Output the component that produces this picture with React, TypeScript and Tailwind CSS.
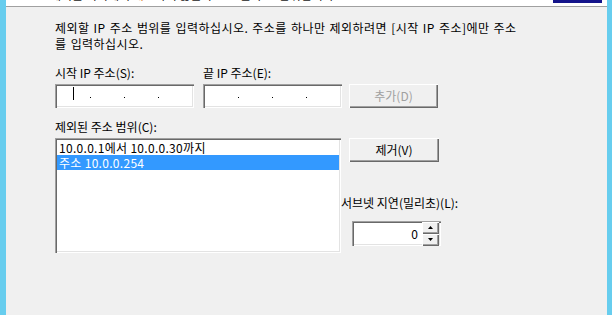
const sunken =
  "shadow-[inset_1px_1px_0_#a0a0a0,inset_2px_2px_0_#696969,inset_-1px_-1px_0_#ffffff,inset_-2px_-2px_0_#e3e3e3]";
const raised =
  "shadow-[inset_1px_1px_0_#ffffff,inset_-1px_-1px_0_#696969,inset_-2px_-2px_0_#a0a0a0]";

const IpBox = ({ caret = false }: { caret?: boolean }) => (
  <div className={`relative flex h-[24px] w-[139px] items-center bg-white pl-[35px] pt-[2px] ${sunken}`}>
    <div className="flex gap-[33px]">
      <span className="h-[1px] w-[1px] bg-black" />
      <span className="h-[1px] w-[1px] bg-black" />
      <span className="h-[1px] w-[1px] bg-black" />
    </div>
    {caret && <span className="absolute left-[18px] top-[3px] h-[13px] w-[1px] bg-black" />}
  </div>
);

const SpinArrow = ({ down = false }: { down?: boolean }) => (
  <div className={`flex h-[12px] w-[17px] items-center justify-center bg-[#f0f0f0] ${raised}`}>
    <svg width="5" height="3" viewBox="0 0 5 3" className={down ? "rotate-180" : ""}>
      <path d="M2.5 0 L5 3 L0 3 Z" fill="#000" />
    </svg>
  </div>
);

export default function App() {
  return (
    <div className="flex h-[315px] w-[612px] font-['Noto_Sans_CJK_KR',sans-serif] text-[12px] leading-[16px] text-black">
      <div className="w-[6px] bg-[#67cdee]" />

      <div className="flex flex-1 flex-col bg-[#f0f0f0]">
        {/* wizard header, mostly scrolled off */}
        <div className="flex h-[7px] overflow-hidden border-b border-[#a0a0a0] bg-white">
          <p className="-mt-[13px] ml-[44px] whitespace-nowrap text-[#222]">
            제외는 서버에서 <span className="text-[#e07a1a]">배</span>포하지 않는 주소 또는 주소 범위입니다.
          </p>
          <div className="ml-auto mr-[5px] h-[3px] w-[49px] shrink-0 bg-[#14148a]" />
        </div>

        <div className="pl-[49px] pt-[13px]">
          <p className="whitespace-nowrap tracking-[0.45px] [word-spacing:1px]">
            제외할 IP 주소 범위를 입력하십시오. 주소를 하나만 제외하려면 [시작 IP 주소]에만 주소
            <br />를 입력하십시오.
          </p>

          <div className="mt-[13px] flex items-end">
            <div className="w-[139px]">
              <div>시작 IP 주소(S):</div>
              <div className="mt-[3px]">
                <IpBox caret />
              </div>
            </div>
            <div className="ml-[9px] w-[139px]">
              <div>끝 IP 주소(E):</div>
              <div className="mt-[3px]">
                <IpBox />
              </div>
            </div>
            <button
              disabled
              className={`ml-[7px] h-[24px] w-[89px] bg-[#f0f0f0] text-[#a0a0a0] ${raised}`}
            >
              추가(D)
            </button>
          </div>

          <div className="mt-[11px] flex">
            <div className="w-[286px]">
              <div>제외된 주소 범위(C):</div>
              <div className={`mt-[3px] h-[115px] bg-white p-[2px] tracking-[0.3px] ${sunken}`}>
                <div className="h-[15px] overflow-hidden pl-[2px] leading-[15px]">10.0.0.1에서 10.0.0.30까지</div>
                <div className="h-[15px] overflow-hidden bg-[#3399ff] pl-[2px] leading-[15px] text-white">
                  주소 10.0.0.254
                </div>
              </div>
            </div>

            <div className="pt-[19px]">
              <button className={`ml-[8px] h-[24px] w-[90px] bg-[#f0f0f0] ${raised}`}>제거(V)</button>
              <div className="mt-[33px] whitespace-nowrap">서브넷 지연(밀리초)(L):</div>
              <div className={`ml-[11px] mt-[10px] flex h-[25px] w-[89px] items-center bg-white pl-[2px] pr-[2px] ${sunken}`}>
                <span className="flex-1 pr-[4px] text-right">0</span>
                <div className="flex flex-col">
                  <SpinArrow />
                  <SpinArrow down />
                </div>
              </div>
            </div>
          </div>
        </div>
      </div>

      <div className="w-[5px] bg-[#67cdee]" />
    </div>
  );
}
